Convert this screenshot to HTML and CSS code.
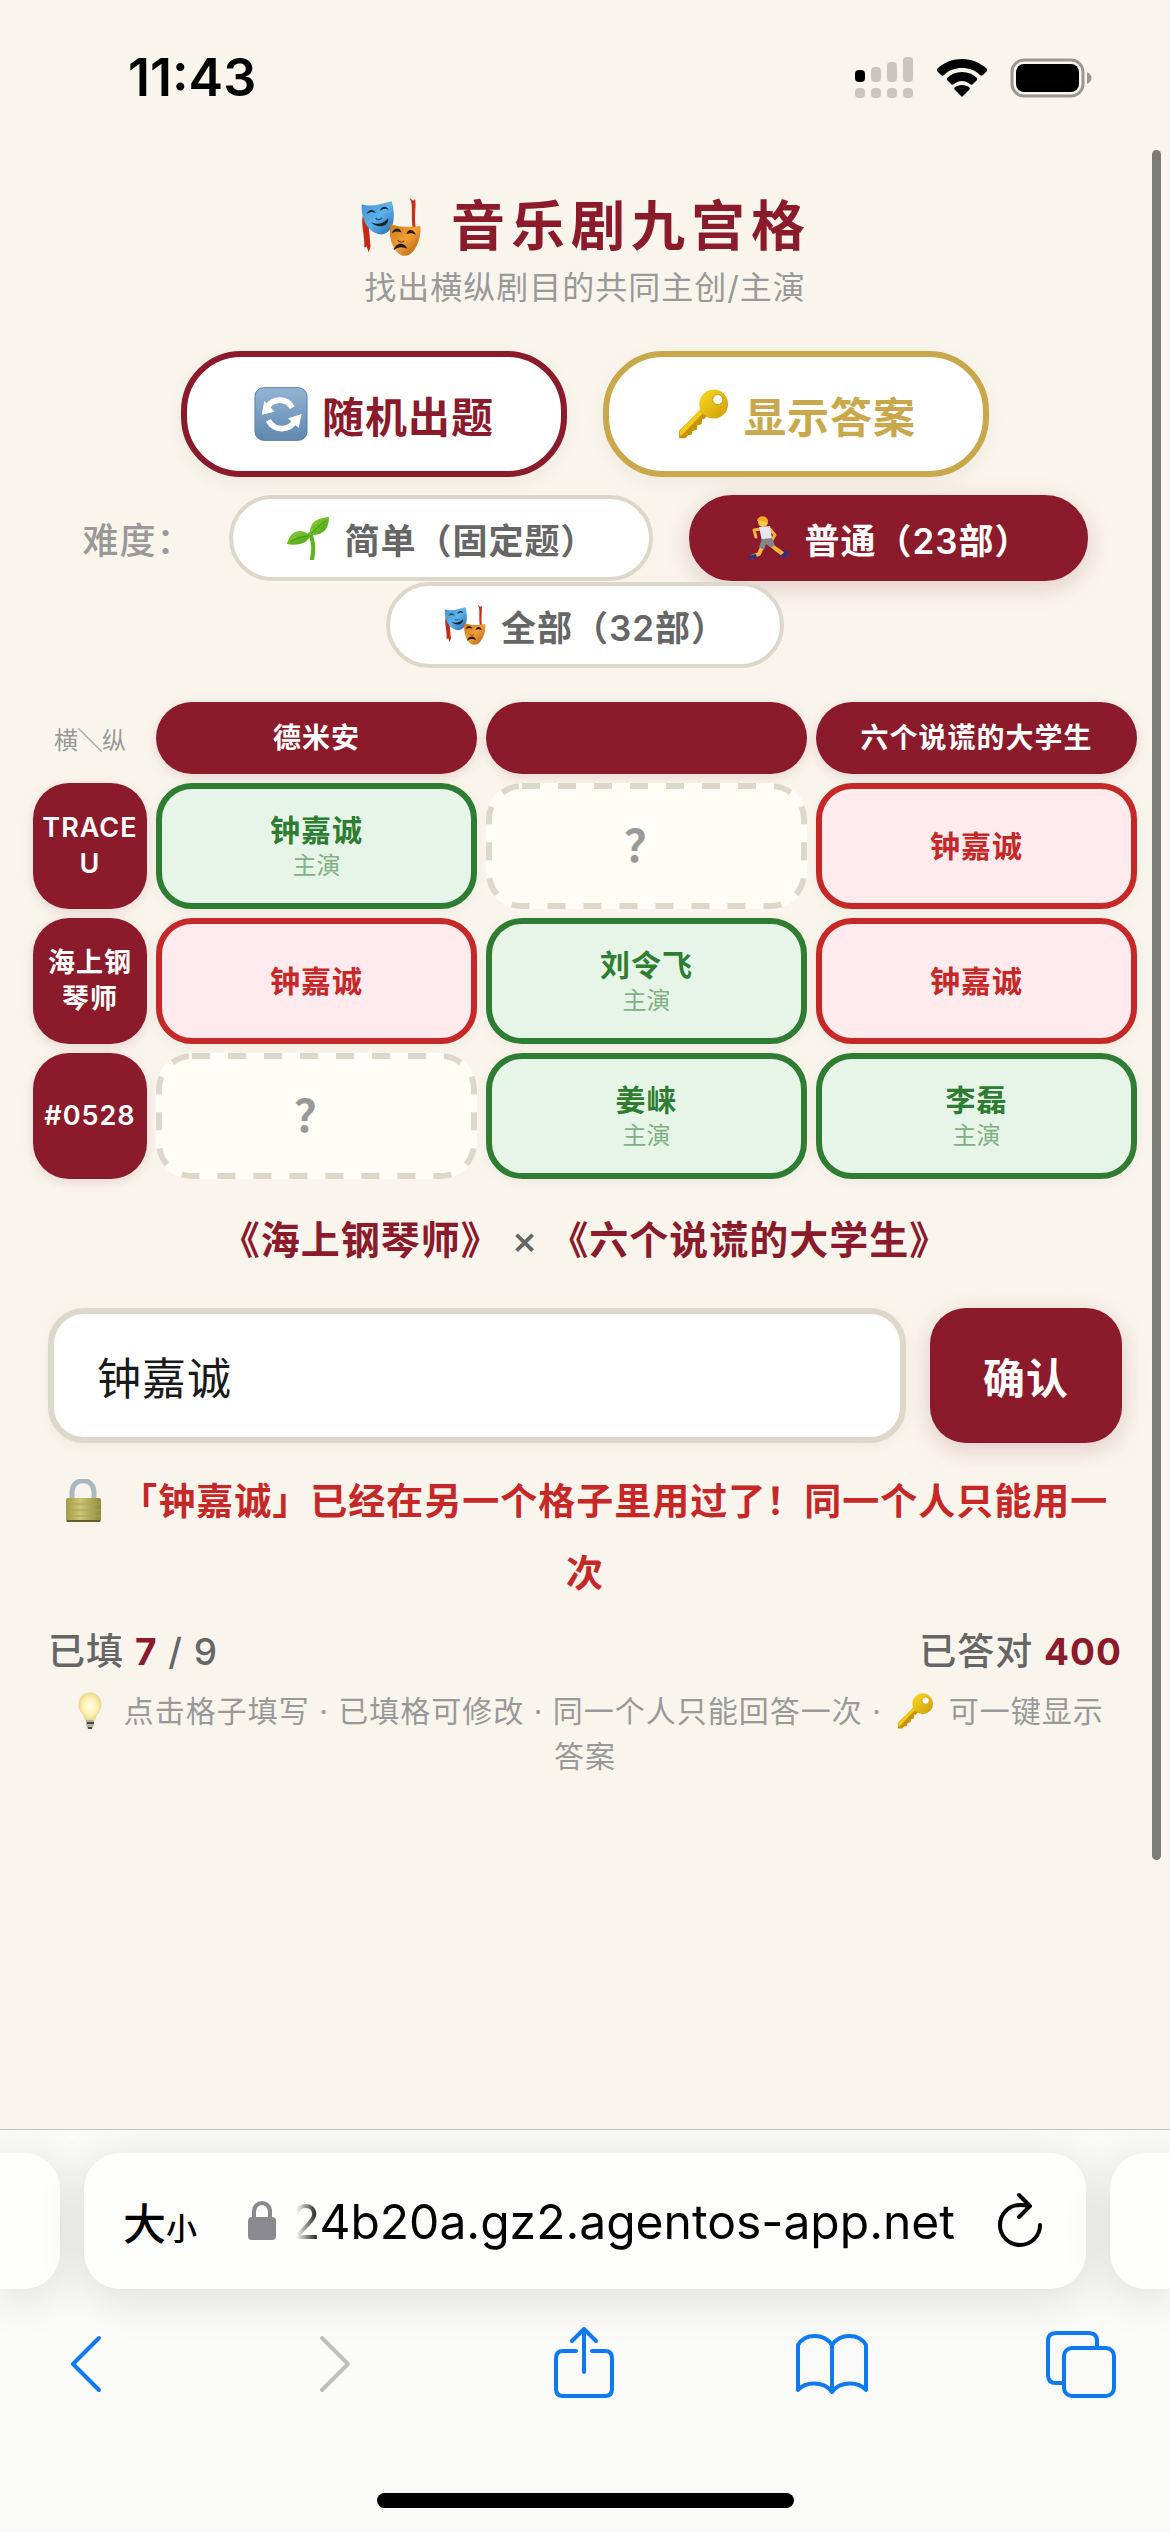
FILE: index.html
```html
<!DOCTYPE html>
<html lang="zh-CN">
<head>
    <meta charset="UTF-8">
    <meta name="viewport" content="width=device-width, initial-scale=1.0">
    <title>音乐剧九宫格</title>
    <link rel="stylesheet" href="styles.css">
</head>
<body>
    <!-- 图标定义 -->
    <svg class="defs" aria-hidden="true">
        <defs>
            <linearGradient id="gBlue" x1="0" y1="0" x2="1" y2="1">
                <stop offset="0" stop-color="#3f8fd0"/>
                <stop offset=".5" stop-color="#5db4ec"/>
                <stop offset="1" stop-color="#2a62a8"/>
            </linearGradient>
            <linearGradient id="gOrange" x1="0" y1="0" x2="1" y2="1">
                <stop offset="0" stop-color="#c97a1c"/>
                <stop offset=".5" stop-color="#f0a035"/>
                <stop offset="1" stop-color="#a8590f"/>
            </linearGradient>
            <linearGradient id="gKey" x1="0" y1="0" x2="1" y2="1">
                <stop offset="0" stop-color="#fbdc1e"/>
                <stop offset="1" stop-color="#cf9a08"/>
            </linearGradient>
            <linearGradient id="gSquare" x1="0" y1="0" x2="0" y2="1">
                <stop offset="0" stop-color="#93b4d4"/>
                <stop offset="1" stop-color="#5f87af"/>
            </linearGradient>
            <linearGradient id="gLeaf" x1="0" y1="0" x2="1" y2="1">
                <stop offset="0" stop-color="#8ed63a"/>
                <stop offset="1" stop-color="#46a012"/>
            </linearGradient>
            <linearGradient id="gLock" x1="0" y1="0" x2="1" y2="0">
                <stop offset="0" stop-color="#a39a45"/>
                <stop offset=".4" stop-color="#cdc676"/>
                <stop offset="1" stop-color="#938a3c"/>
            </linearGradient>
            <radialGradient id="gBulb">
                <stop offset="0" stop-color="#fffef2"/>
                <stop offset=".6" stop-color="#fff3b4"/>
                <stop offset="1" stop-color="#eedb90"/>
            </radialGradient>
        </defs>
        <symbol id="masks" viewBox="32 50 188 188">
            <path d="M43 110c-6 30 8 66 4 94l8-3 5 17 6-16c-3-40-7-64-6-98z" fill="#c42a16"/>
            <path d="M181 58c12 25 2 50 9 90h9c-6-36 2-62-2-86l-6 5z" fill="#c9301a"/>
            <path d="M40 77c28 9 58-1 88-9 6 22 9 45 3 68-6 19-20 29-34 30-27-3-44-22-52-48-5-14-6-27-5-41z" fill="url(#gBlue)"/>
            <path d="M124 136c26 8 58 10 88 4 3 27-4 54-21 76-12 14-28 17-43 6-22-19-29-55-24-86z" fill="url(#gOrange)"/>
            <path d="M54 106c7-15 21-15 28-3-10-5-19-4-28 3zM93 98c5-17 20-17 26-5-10-4-18-3-26 5zM67 129c18 10 38 5 51-11 2 26-33 32-51 11z" fill="#14242c"/>
            <path d="M81 117c6 9 15 6 18 0" fill="none" stroke="#1d4f80" stroke-width="4"/>
            <path d="M129 162c5-18 23-18 28-2-10-4-19-4-28 2zM171 165c5-18 22-15 28 2-9-6-19-6-28-2zM134 212c6-24 32-25 40-4-14-7-27-6-40 4z" fill="#28190a"/>
            <path d="M146 182c4 8 14 8 19 2" fill="none" stroke="#7a430b" stroke-width="4"/>
        </symbol>
        <symbol id="refresh" viewBox="44 52 160 162">
            <rect x="46" y="54" width="156" height="158" rx="26" fill="url(#gSquare)" stroke="#587ca3" stroke-width="3"/>
            <path d="M84 112c14-26 56-30 74 2M166 152c-14 30-60 36-80 0" fill="none" stroke="#fff" stroke-width="17"/>
            <path d="M74 94l-8 41 39-9zM186 133l-41 13 32 29z" fill="#fff"/>
        </symbol>
        <symbol id="key" viewBox="18 20 172 168">
            <path d="M98 88l20 21-11 12-6-1-1 17-14 3-1 13-15 6-3 12-11 0-8 10H28v-24z" fill="#c79208"/>
            <path d="M96 88l10 11-73 76-4-16z" fill="#f2cb1b"/>
            <circle cx="138" cy="72" r="46" fill="url(#gKey)"/>
            <circle cx="151" cy="58" r="16" fill="#fff" stroke="#c89a10" stroke-width="3"/>
        </symbol>
        <symbol id="sprout" viewBox="0 0 44 44">
            <path d="M24 18c4 8 4 16 2 25" fill="none" stroke="#5cb51d" stroke-width="4" stroke-linecap="round"/>
            <path d="M24 19C23 6 31 2 43 1c0 12-6 19-19 18z" fill="url(#gLeaf)"/>
            <path d="M24 20C16 11 4 14 1 28c9 2 20 0 23-8z" fill="url(#gLeaf)"/>
            <path d="M25 18C30 12 35 8 40 5M23 20C16 20 9 23 4 26" fill="none" stroke="#3f9412" stroke-width="1"/>
        </symbol>
        <symbol id="runner" viewBox="0 0 44 44">
            <path d="M17 29l-4 9-8 3M24 28l6 5 7 5" fill="none" stroke="#f3b43b" stroke-width="4" stroke-linejoin="round"/>
            <path d="M2 40l8-2 1 4-8 1zM35 39l6-5 2 3-6 6z" fill="#22348a"/>
            <path d="M15 13L8 14l2 7M24 13l5 6-3 5" fill="none" stroke="#f3b43b" stroke-width="3" stroke-linejoin="round" stroke-linecap="round"/>
            <path d="M13 11l11-1 2 13-10 2z" fill="#e6e6ee"/>
            <path d="M16 23l10-1 3 8-5 1-4-3-2 6-5-3z" fill="#84848c"/>
            <circle cx="17" cy="6" r="5" fill="#ffc84a"/>
            <path d="M11 5c1-7 12-6 11 2-4-3-7-2-11-2z" fill="#f1a91d"/>
        </symbol>
        <symbol id="padlock" viewBox="0 0 44 44">
            <path d="M10 22V13C10 -2 32 -2 32 13v9" fill="none" stroke="#a9b9c1" stroke-width="5"/>
            <rect x="4" y="19" width="35" height="24" rx="2" fill="url(#gLock)"/>
            <path d="M4 25h35M4 31h35M4 37h35" stroke="#aaa257" stroke-width="1"/>
            <path d="M5 42h33" stroke="#645e2b" stroke-width="2"/>
        </symbol>
        <symbol id="bulb" viewBox="0 0 38 38">
            <path d="M19 1C11 1 8 7 8 13c0 7 6 9 6 15h10c0-6 6-8 6-15 0-6-3-12-11-12z" fill="url(#gBulb)" stroke="#ead894" stroke-width="1"/>
            <path d="M15 28h8v5l-2 4h-4l-2-4z" fill="#b5b29c"/>
            <path d="M16 31h7M17 36h4" stroke="#4b4a42" stroke-width="2"/>
        </symbol>
    </svg>

    <!-- 状态栏 -->
    <header class="status-bar">
        <span class="time">11:43</span>
        <div class="status-icons">
            <svg width="60" height="42" viewBox="0 0 60 42" fill="#c9c6c0">
                <rect x="1" y="13" width="10" height="12" rx="4" fill="#000"/>
                <rect x="17" y="10" width="10" height="15" rx="4"/>
                <rect x="33" y="5" width="10" height="20" rx="4"/>
                <rect x="49" y="0" width="10" height="25" rx="4"/>
                <rect x="1" y="31" width="10" height="10" rx="4"/>
                <rect x="17" y="31" width="10" height="10" rx="4"/>
                <rect x="33" y="31" width="10" height="10" rx="4"/>
                <rect x="49" y="31" width="10" height="10" rx="4"/>
            </svg>
            <svg width="52" height="38" viewBox="0 0 52 38" fill="#000">
                <path d="M26 0C16 0 7 4 1 10v2l4 4c1 1 2 1 3 0 5-5 11-7 18-7s13 2 18 7c1 1 2 1 3 0l4-4v-2C45 4 36 0 26 0z"/>
                <path d="M26 13c-6 0-11 2-15 6v2l4 4c1 1 2 1 3 0 5-4 11-4 16 0 1 1 2 1 3 0l4-4v-2c-4-4-9-6-15-6z"/>
                <path d="M26 26c-3 0-5 1-7 2-1 1-1 2 0 3l6 6c1 1 1 1 2 0l6-6c1-1 1-2 0-3-2-1-4-2-7-2z"/>
            </svg>
            <svg width="82" height="40" viewBox="0 0 82 40">
                <rect x="2" y="2" width="71" height="36" rx="12" fill="none" stroke="#9a9893" stroke-width="3"/>
                <rect x="6" y="6" width="63" height="28" rx="8"/>
                <path d="M77 14c6 3 6 9 0 12z" fill="#9a9893"/>
            </svg>
        </div>
    </header>

    <main class="game">
        <div class="scroll-thumb"></div>

        <h1><svg class="emoji"><use href="#masks"/></svg>音乐剧九宫格</h1>
        <p class="subtitle">找出横纵剧目的共同主创/主演</p>

        <div class="actions">
            <button type="button" class="action random"><svg class="emoji"><use href="#refresh"/></svg>随机出题</button>
            <button type="button" class="action reveal"><svg class="emoji"><use href="#key"/></svg>显示答案</button>
        </div>

        <!-- 难度选择 -->
        <div class="levels">
            <span class="levels-label">难度：</span>
            <button type="button" class="level"><svg class="emoji"><use href="#sprout"/></svg>简单（固定题）</button>
            <button type="button" class="level active"><svg class="emoji"><use href="#runner"/></svg>普通（23部）</button>
            <button type="button" class="level"><svg class="emoji"><use href="#masks"/></svg>全部（32部）</button>
        </div>

        <!-- 九宫格 -->
        <table class="board">
            <thead>
                <tr>
                    <td class="corner">横╲纵</td>
                    <th scope="col">德米安</th>
                    <th scope="col"></th>
                    <th scope="col">六个说谎的大学生</th>
                </tr>
            </thead>
            <tbody>
                <tr>
                    <th scope="row">TRACE U</th>
                    <td><button type="button" class="cell correct">钟嘉诚<small>主演</small></button></td>
                    <td><button type="button" class="cell empty"><svg class="dash"><rect x="3" y="3" rx="33"/></svg>？</button></td>
                    <td><button type="button" class="cell wrong">钟嘉诚</button></td>
                </tr>
                <tr>
                    <th scope="row">海上钢琴师</th>
                    <td><button type="button" class="cell wrong">钟嘉诚</button></td>
                    <td><button type="button" class="cell correct">刘令飞<small>主演</small></button></td>
                    <td><button type="button" class="cell wrong">钟嘉诚</button></td>
                </tr>
                <tr>
                    <th scope="row">#0528</th>
                    <td><button type="button" class="cell empty"><svg class="dash"><rect x="3" y="3" rx="33"/></svg>？</button></td>
                    <td><button type="button" class="cell correct">姜崃<small>主演</small></button></td>
                    <td><button type="button" class="cell correct">李磊<small>主演</small></button></td>
                </tr>
            </tbody>
        </table>

        <!-- 答题区 -->
        <label class="question" for="answer">《海上钢琴师》 <span>×</span> 《六个说谎的大学生》</label>
        <form class="answer-form">
            <input type="text" id="answer" value="钟嘉诚" autocomplete="off">
            <button type="submit">确认</button>
        </form>
        <p class="message"><svg class="emoji"><use href="#padlock"/></svg> 「钟嘉诚」已经在另一个格子里用过了！同一个人只能用一次</p>

        <div class="stats">
            <span>已填 <b>7</b> / 9</span>
            <span>已答对 <b>400</b></span>
        </div>
        <p class="hint"><svg class="emoji"><use href="#bulb"/></svg> 点击格子填写 · 已填格可修改 · 同一个人只能回答一次 · <svg class="emoji"><use href="#key"/></svg> 可一键显示答案</p>
    </main>

    <!-- 浏览器底栏 -->
    <footer class="browser">
        <div class="tabs">
            <div class="tab-edge left"></div>
            <div class="address">
                <button type="button" class="text-size">大<small>小</small></button>
                <svg class="lock" width="28" height="40" viewBox="0 0 28 40">
                    <path d="M6 18v-7C6 -1 22 -1 22 11v7" fill="none" stroke="#8a898e" stroke-width="4"/>
                    <rect x="0" y="16" width="28" height="23" rx="4" fill="#8a898e"/>
                </svg>
                <a class="url" href="#">24b20a.gz2.agentos-app.net</a>
                <button type="button" aria-label="刷新">
                    <svg width="46" height="56" viewBox="0 0 46 56" fill="none" stroke="#000" stroke-width="4" stroke-linecap="round" stroke-linejoin="round">
                        <path d="M43 33A20 20 0 1 1 23 13q5 0 9 1M22 3l11 11-11 11"/>
                    </svg>
                </button>
            </div>
            <div class="tab-edge right"></div>
        </div>
        <nav class="toolbar">
            <button type="button" aria-label="后退">
                <svg width="34" height="76" viewBox="0 0 34 76"><path d="M30 12L4 38l26 26"/></svg>
            </button>
            <button type="button" aria-label="前进" disabled>
                <svg width="34" height="76" viewBox="0 0 34 76"><path d="M4 12l26 26L4 64"/></svg>
            </button>
            <button type="button" aria-label="分享">
                <svg width="60" height="76" viewBox="0 0 60 76"><path d="M22 25H9q-7 0-7 7v31q0 7 7 7h42q7 0 7-7V32q0-7-7-7H38M30 46V3M18 15L30 3l12 12"/></svg>
            </button>
            <button type="button" aria-label="书签">
                <svg width="74" height="76" viewBox="0 0 74 76"><path d="M37 19C29 7 10 7 3 19v45c8-9 26-9 34 2 8-11 26-11 34-2V19C64 7 45 7 37 19zV66"/></svg>
            </button>
            <button type="button" aria-label="标签页">
                <svg width="70" height="76" viewBox="0 0 70 76"><path d="M18 57h-8q-8 0-8-8V15q0-8 8-8h33q8 0 8 8v7"/><rect x="18" y="22" width="50" height="48" rx="8"/></svg>
            </button>
        </nav>
        <div class="home-bar"></div>
    </footer>
</body>
</html>
```
FILE: styles.css
```css
* {
    box-sizing: border-box;
}

body {
    display: flex;
    flex-direction: column;
    min-height: 100vh;
    margin: 0;
    font-family: Inter, "Noto Sans CJK SC", sans-serif;
    letter-spacing: 1px;
    color: #666;
    background-color: #f9f5ed;
}

button, input {
    font-family: inherit;
    letter-spacing: inherit;
    cursor: pointer;
}

button {
    padding: 0;
    border: none;
    background: none;
}

p, h1 {
    margin: 0;
    text-align: center;
}

svg {
    flex: none;
}

.defs {
    position: absolute;
    width: 0;
    height: 0;
}

.emoji {
    width: 36px;
    height: 36px;
    vertical-align: middle;
}

/* 状态栏 */
.status-bar {
    display: flex;
    justify-content: space-between;
    align-items: center;
    height: 141px;
    padding: 14px 78px 0 128px;
    color: #000;
}

.time {
    font-size: 52px;
    font-weight: 600;
    letter-spacing: 0;
}

.status-icons {
    display: flex;
    align-items: center;
    gap: 22px;
}

/* 游戏主体 */
.game {
    position: relative;
    flex: 1;
    padding: 50px 33px 0;
}

.scroll-thumb {
    position: absolute;
    top: 9px;
    right: 9px;
    width: 9px;
    height: 86%;
    border-radius: 5px;
    background-color: #7c7b76;
}

h1 {
    display: flex;
    justify-content: center;
    align-items: center;
    gap: 28px;
    font-size: 54px;
    line-height: 72px;
    letter-spacing: 6px;
    color: #8b1a2b;
}

h1 .emoji {
    width: 64px;
    height: 64px;
}

.subtitle {
    margin-top: 4px;
    font-size: 32px;
    line-height: 42px;
    color: #999;
}

.actions {
    display: flex;
    justify-content: center;
    gap: 36px;
    margin-top: 42px;
}

.action {
    display: flex;
    align-items: center;
    gap: 14px;
    height: 126px;
    padding: 0 67px;
    border: 6px solid #8b1a2b;
    border-radius: 60px;
    font-size: 42px;
    font-weight: 600;
    color: #8b1a2b;
    background-color: #fff;
    box-shadow: 0 6px 18px rgba(80, 60, 20, 0.06);
}

.action .emoji {
    width: 54px;
    height: 54px;
}

.reveal {
    border-color: #c9a84c;
    color: #c9a84c;
}

/* 难度 */
.levels {
    display: flex;
    flex-wrap: wrap;
    justify-content: center;
    align-items: center;
    gap: 1px 36px;
    margin-top: 18px;
}

.levels-label {
    font-size: 36px;
    font-weight: 500;
    color: #999;
}

.level {
    display: flex;
    align-items: center;
    gap: 14px;
    height: 86px;
    padding: 0 53px;
    border: 4px solid #ded8ca;
    border-radius: 43px;
    font-size: 35px;
    font-weight: 600;
    color: #666;
    background-color: #fff;
}

.level .emoji {
    width: 44px;
    height: 44px;
}

.level.active {
    border-color: #8b1a2b;
    color: #fff;
    background-color: #8b1a2b;
    box-shadow: 0 6px 24px rgba(139, 26, 43, 0.2);
}

/* 九宫格 */
.board {
    display: grid;
    grid-template-columns: 114px repeat(3, 1fr);
    grid-template-rows: 72px repeat(3, 126px);
    gap: 9px;
    margin-top: 34px;
}

thead, tbody, tr {
    display: contents;
}

.board th, .corner {
    display: flex;
    justify-content: center;
    align-items: center;
    padding: 0 8px;
    text-align: center;
}

.board th {
    border-radius: 36px;
    font-size: 28px;
    line-height: 36px;
    font-weight: 600;
    color: #fff;
    background-color: #8b1a2b;
    box-shadow: 0 3px 12px rgba(139, 26, 43, 0.15);
}

.board tbody th {
    font-size: 27px;
}

.corner {
    font-size: 24px;
    letter-spacing: 0;
    color: #999;
}

.board td {
    padding: 0;
}

.board .corner {
    white-space: nowrap;
}

.cell {
    position: relative;
    display: flex;
    flex-direction: column;
    justify-content: center;
    align-items: center;
    width: 100%;
    height: 100%;
    border: 6px solid;
    border-radius: 36px;
    font-size: 30px;
    line-height: 40px;
    font-weight: 700;
    box-shadow: 0 3px 12px rgba(80, 60, 20, 0.06);
}

.cell small {
    font-size: 24px;
    line-height: 32px;
    font-weight: 400;
    letter-spacing: 0;
    color: #81b184;
}

.cell.correct {
    border-color: #2e7d32;
    color: #2e7d32;
    background-color: #e7f5e9;
}

.cell.wrong {
    border-color: #c62828;
    color: #c62828;
    background-color: #ffebee;
}

.cell.empty {
    border: none;
    font-size: 44px;
    font-weight: 600;
    color: #999;
    background-color: #fffdf6;
    box-shadow: none;
}

/* 空格子的虚线框 */
.dash {
    position: absolute;
    inset: 0;
    width: 100%;
    height: 100%;
}

.dash rect {
    width: calc(100% - 6px);
    height: calc(100% - 6px);
    fill: none;
    stroke: #ded8ca;
    stroke-width: 6px;
    stroke-dasharray: 18px;
}

/* 答题区 */
.question {
    display: block;
    margin-top: 31px;
    font-size: 39px;
    line-height: 60px;
    font-weight: 600;
    text-align: center;
    color: #8b1a2b;
}

.question span {
    font-weight: 500;
    color: #666;
}

.answer-form {
    display: flex;
    gap: 24px;
    margin: 38px 15px 0;
}

.answer-form input {
    flex: 1;
    min-width: 0;
    height: 135px;
    padding: 0 43px;
    border: 6px solid #ded8ca;
    border-radius: 36px;
    font-size: 44px;
    color: #1a1a1a;
    background-color: #fff;
    outline: none;
    box-shadow: 0 3px 12px rgba(80, 60, 20, 0.06);
}

.answer-form button {
    padding: 0 53px;
    border-radius: 36px;
    font-size: 42px;
    font-weight: 600;
    color: #fff;
    background-color: #8b1a2b;
    box-shadow: 0 6px 24px rgba(139, 26, 43, 0.2);
}

.message {
    margin: 23px 15px 0;
    font-size: 37px;
    line-height: 72px;
    font-weight: 600;
    color: #c62828;
}

.message .emoji {
    width: 44px;
    height: 44px;
    margin-right: 4px;
    margin-bottom: 8px;
}

.stats {
    display: flex;
    justify-content: space-between;
    margin: 15px 15px 0;
    font-size: 37px;
    line-height: 54px;
    font-weight: 500;
}

.stats b {
    font-weight: 700;
    color: #8b1a2b;
}

.hint {
    margin: 10px 30px 0;
    font-size: 30px;
    line-height: 45px;
    color: #999;
}

.hint .emoji {
    width: 40px;
    height: 38px;
    margin: 0 4px;
    vertical-align: -8px;
}

/* 浏览器底栏 */
.browser {
    border-top: 1px solid #c3c4bc;
    letter-spacing: 0;
    background-color: #fafaf8;
    overflow: hidden;
}

.tabs {
    display: flex;
    gap: 24px;
    padding: 23px 0 0;
}

.tab-edge, .address {
    height: 136px;
    background-color: #fefefd;
    box-shadow: 0 8px 48px rgba(0, 0, 0, 0.12);
}

.tab-edge {
    flex: none;
    width: 60px;
}

.tab-edge.left {
    border-radius: 0 36px 36px 0;
}

.tab-edge.right {
    border-radius: 36px 0 0 36px;
}

.address {
    display: flex;
    flex: 1;
    align-items: center;
    min-width: 0;
    padding: 0 43px 0 39px;
    border-radius: 36px;
}

.text-size {
    display: flex;
    align-items: baseline;
    font-size: 43px;
    font-weight: 500;
    color: #000;
}

.text-size small {
    font-size: 31px;
}

.lock {
    margin-left: 51px;
}

/* 网址过长时左侧渐隐 */
.url {
    display: flex;
    flex: 1;
    justify-content: flex-end;
    min-width: 0;
    margin: 0 42px 0 20px;
    font-size: 48px;
    text-decoration: none;
    white-space: nowrap;
    color: #000;
    overflow: hidden;
    -webkit-mask-image: linear-gradient(to right, transparent, #000 24px);
    mask-image: linear-gradient(to right, transparent, #000 24px);
}

.toolbar {
    display: flex;
    justify-content: space-between;
    padding: 37px 52px 0 49px;
}

.toolbar button {
    display: flex;
    justify-content: center;
    width: 74px;
}

.toolbar svg {
    fill: none;
    stroke: #0f7af0;
    stroke-width: 4;
    stroke-linecap: round;
    stroke-linejoin: round;
}

.toolbar button:disabled svg {
    stroke: #bfbfbf;
}

.home-bar {
    width: 417px;
    height: 15px;
    margin: 91px auto 24px;
    border-radius: 8px;
    background-color: #000;
}
```
